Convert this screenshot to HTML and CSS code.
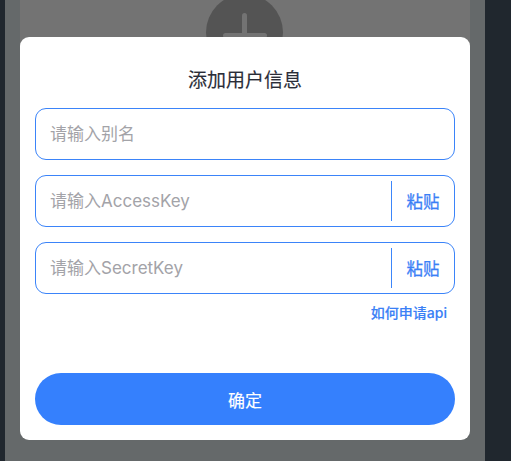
FILE: index.html
```html
<!DOCTYPE html>
<html lang="zh-CN">
<head>
<meta charset="utf-8">
<title>添加用户信息</title>
<link rel="stylesheet" href="styles.css">
</head>
<body>
<div class="screen">
  <div class="card">
    <div class="add-circle"><span class="plus-v"></span><span class="plus-h"></span></div>
  </div>
  <div class="modal">
    <h2 class="modal-title">添加用户信息</h2>
    <div class="field">
      <input class="field-input" type="text" placeholder="请输入别名">
    </div>
    <div class="field">
      <input class="field-input" type="text" placeholder="请输入AccessKey">
      <span class="divider"></span>
      <button class="paste" type="button">粘贴</button>
    </div>
    <div class="field field-last">
      <input class="field-input" type="text" placeholder="请输入SecretKey">
      <span class="divider"></span>
      <button class="paste" type="button">粘贴</button>
    </div>
    <div class="help-row"><a class="help-link" href="#">如何申请api</a></div>
    <button class="confirm" type="button">确定</button>
  </div>
</div>
</body>
</html>
```
FILE: styles.css
```css
* { box-sizing: border-box; }
html, body { margin: 0; padding: 0; }
body {
  width: 511px;
  height: 461px;
  background: #20272e;
  overflow: hidden;
  font-family: "Inter", "Noto Sans CJK SC", sans-serif;
}
.screen {
  position: relative;
  margin-left: 5px;
  width: 480px;
  height: 461px;
  background: #65696a;
  padding: 0 15px;
}
.card {
  height: 220px;
  background: #737373;
  display: flex;
  justify-content: center;
}
.add-circle {
  position: relative;
  width: 77px;
  height: 77px;
  margin-top: -6px;
  border-radius: 50%;
  background: #545454;
  margin-left: -1px;
}
.plus-v {
  position: absolute;
  left: 36px;
  top: 19px;
  width: 5px;
  height: 40px;
  border-radius: 3px;
  background: #737373;
}
.plus-h {
  position: absolute;
  left: 17px;
  top: 39px;
  width: 44px;
  height: 5px;
  border-radius: 3px;
  background: #737373;
}
.modal {
  position: absolute;
  left: 15px;
  top: 37px;
  width: 450px;
  height: 403px;
  background: #ffffff;
  border-radius: 9px;
  padding: 28px 15px 15px;
  display: flex;
  flex-direction: column;
}
.modal-title {
  margin: 0 0 15px;
  height: 28px;
  line-height: 28px;
  text-align: center;
  font-size: 19px;
  font-weight: 400;
  color: #2a2d38;
  font-family: "Noto Sans CJK SC", sans-serif;
  -webkit-text-stroke: 0.15px #2a2d38;
}
.field {
  display: flex;
  align-items: center;
  height: 52px;
  border: 1.6px solid #3b84f9;
  border-radius: 11px;
  margin-bottom: 15px;
}
.field-last { margin-bottom: 0; }
.field-input {
  flex: 1;
  min-width: 0;
  height: 100%;
  border: none;
  outline: none;
  background: transparent;
  padding: 0 14px;
  font-family: "Inter", "Noto Sans CJK SC", sans-serif;
  font-size: 17px;
  color: #333;
}
.field-input::placeholder { color: #a3a3a8; }
.divider {
  width: 1px;
  align-self: stretch;
  margin: 5px 0;
  background: #3d86fa;
}
.paste {
  width: 62px;
  height: 100%;
  border: none;
  background: transparent;
  padding: 0;
  font-family: "Noto Sans CJK SC", sans-serif;
  font-size: 16.5px;
  font-weight: 400;
  color: #3a80f6;
  -webkit-text-stroke: 0.25px #3a80f6;
}
.help-row {
  display: flex;
  justify-content: flex-end;
  padding-right: 8px;
  height: 36px;
  align-items: center;
}
.help-link {
  font-family: "Inter", "Noto Sans CJK SC", sans-serif;
  font-size: 14px;
  font-weight: 500;
  color: #3a80f6;
  text-decoration: none;
  -webkit-text-stroke: 0.15px #3a80f6;
}
.confirm {
  margin-top: auto;
  height: 52px;
  width: 100%;
  border: none;
  border-radius: 26px;
  background: #3580fd;
  color: #ffffff;
  font-family: "Noto Sans CJK SC", sans-serif;
  font-size: 17px;
  font-weight: 400;
  -webkit-text-stroke: 0.15px #ffffff;
}
```
